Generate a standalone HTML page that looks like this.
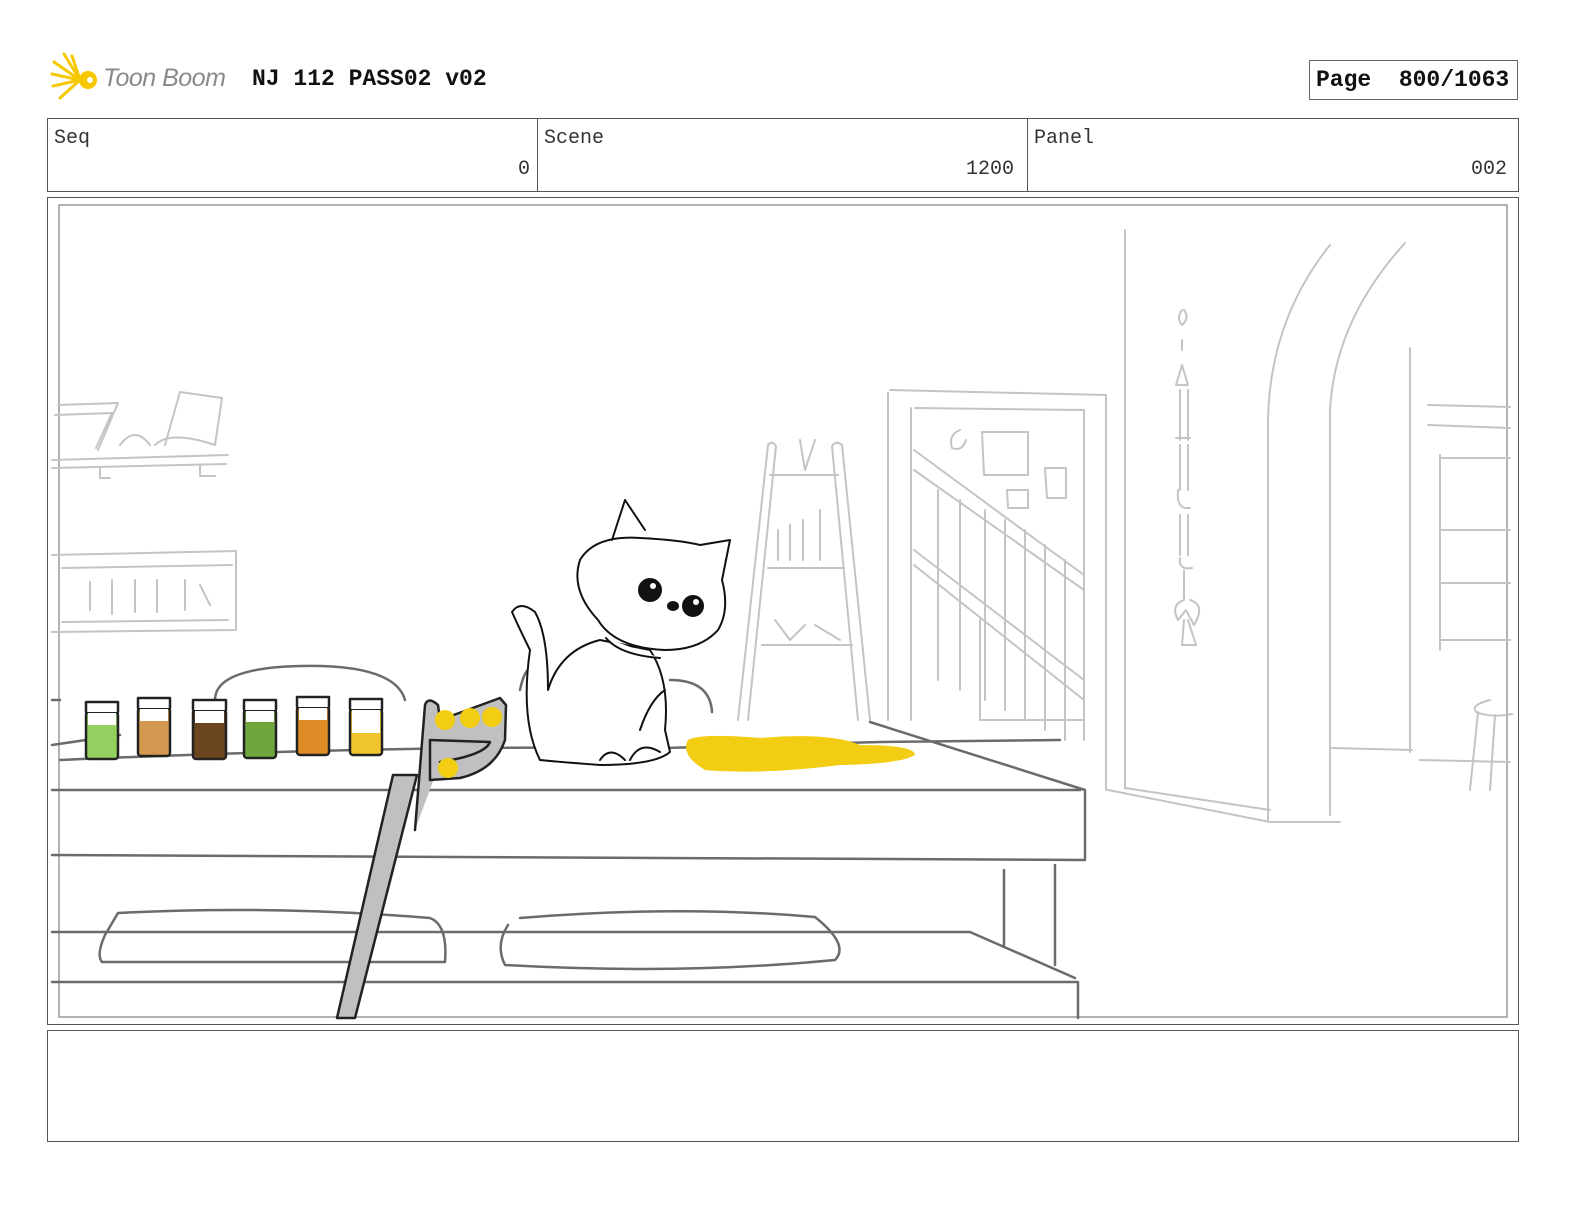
<!DOCTYPE html>
<html><head><meta charset="utf-8"><style>
body{margin:0;background:#fff;width:1584px;height:1224px;position:relative;overflow:hidden;font-family:"Liberation Mono",monospace}
.a{position:absolute}
.box{position:absolute;border:1px solid #555;box-sizing:border-box}
.lbl{font-size:20px;color:#333}
</style></head><body>
<svg class="a" style="left:50px;top:52px" width="52" height="52" viewBox="0 0 52 52">
<g stroke="#f6c800" stroke-width="3" stroke-linecap="round">
<line x1="30" y1="28" x2="4" y2="10"/><line x1="30" y1="28" x2="2" y2="22"/><line x1="30" y1="28" x2="3" y2="34"/><line x1="30" y1="28" x2="10" y2="46"/><line x1="30" y1="28" x2="22" y2="4"/><line x1="30" y1="28" x2="14" y2="2"/></g>
<circle cx="38" cy="28" r="9" fill="#f6c800"/><circle cx="40" cy="28" r="3" fill="#fff"/></svg>
<div class="a" style="left:103px;top:64px;font-family:'Liberation Sans',sans-serif;font-style:italic;font-size:25px;color:#8a8a8a;letter-spacing:-0.5px">Toon Boom</div>
<div class="a" style="left:252px;top:66px;font-size:23px;font-weight:bold;color:#111">NJ 112 PASS02 v02</div>
<div class="box" style="left:1309px;top:60px;width:209px;height:40px;border-color:#666"></div>
<div class="a" style="left:1316px;top:67px;font-size:23px;font-weight:bold;color:#111;white-space:pre">Page  800/1063</div>
<div class="box" style="left:47px;top:118px;width:1472px;height:74px"></div>
<div class="a" style="left:537px;top:118px;width:1px;height:74px;background:#555"></div>
<div class="a" style="left:1027px;top:118px;width:1px;height:74px;background:#555"></div>
<div class="a lbl" style="left:54px;top:127px">Seq</div>
<div class="a lbl" style="left:544px;top:127px">Scene</div>
<div class="a lbl" style="left:1034px;top:127px">Panel</div>
<div class="a lbl" style="left:518px;top:158px">0</div>
<div class="a lbl" style="left:966px;top:158px">1200</div>
<div class="a lbl" style="left:1471px;top:158px">002</div>
<div class="box" style="left:47px;top:197px;width:1472px;height:828px"></div>
<div class="box" style="left:47px;top:1030px;width:1472px;height:112px"></div>
<svg class="a" style="left:0;top:0" width="1584" height="1224" viewBox="0 0 1584 1224" fill="none" stroke-linecap="round" stroke-linejoin="round">
<rect x="59" y="205" width="1448" height="812" stroke="#999" stroke-width="1.5"/>
<g stroke="#c4c4c4" stroke-width="2">
<path d="M52 460 L228 455 M52 468 L226 464 M58 405 L118 403 L98 450 M55 415 L112 413 L96 448 M120 445 Q135 425 150 445 M155 445 Q170 430 215 445 L222 398 L180 392 L165 445 M100 468 V478 H110 M200 466 V476 H215"/>
<path d="M52 555 L236 551 L236 630 L52 632 M62 568 L232 565 M62 622 L228 620 M90 582 V610 M112 580 V614 M135 580 V612 M157 580 V612 M185 580 V610 M200 585 L210 605"/>
<path d="M738 720 L768 445 Q772 440 776 446 L748 720 M870 720 L842 445 Q836 440 832 446 L858 720 M770 475 H838 M768 568 H844 M762 645 H852 M778 530 V560 M790 525 V560 M803 520 V560 M820 510 V560 M775 620 L790 640 L805 625 M815 625 L840 640 M800 440 L805 470 L815 440"/>
<path d="M888 393 V720 M890 390 L1106 395 V790 M911 408 V720 M915 408 L1084 410 V740 M914 450 L1084 575 M914 470 L1084 590 M914 550 L1084 680 M914 565 L1084 700 M938 490 V680 M960 500 V690 M985 510 V700 M1005 520 V710 M1025 530 V720 M1045 545 V730 M1065 560 V740 M982 432 H1028 V475 H984 Z M1045 468 H1066 V498 H1047 Z M1007 490 H1028 V508 H1008 Z M960 430 Q948 435 952 448 Q962 452 966 440 M980 620 V720 H1084"/>
<path d="M1125 230 V788 M1108 790 L1270 822 L1340 822 M1125 788 L1270 810 M1268 822 V420 Q1270 320 1330 245 M1330 815 V410 Q1335 320 1405 243 M1332 748 L1412 750 M1410 348 V752 M1420 760 L1510 762 M1428 405 L1510 407 M1428 425 L1510 428 M1440 455 V650 M1440 458 H1510 M1440 530 H1510 M1440 583 H1510 M1440 640 H1510 M1490 700 Q1470 705 1476 712 Q1490 718 1512 714 M1478 712 L1470 790 M1495 715 L1490 790"/>
<path d="M1182 310 Q1176 318 1182 325 Q1190 318 1184 310 M1182 340 V350 M1182 365 L1176 385 H1188 Z M1180 390 V440 M1188 390 V440 M1176 438 H1190 M1180 445 V490 M1188 445 V490 M1178 490 Q1176 510 1190 508 M1180 515 V555 M1188 515 V555 M1180 558 Q1178 570 1192 568 M1184 570 V600 Q1170 605 1178 620 L1186 610 L1194 625 Q1206 605 1190 600 M1184 620 L1182 645 H1196 L1188 620"/>
</g>
<g stroke="#6b6b6b" stroke-width="2.5">
<path d="M215 700 Q215 668 300 666 Q395 664 405 700 M520 690 Q525 665 535 668 M670 680 Q710 680 712 712"/>
<path d="M52 700 L60 700 M52 745 L120 735 M60 760 Q400 745 665 748 L880 742 L1060 740 M52 790 L1080 790 M870 722 L1085 790 L1085 860 M52 855 L1085 860 M52 932 L970 932 L1075 978 M52 982 L1078 982 L1078 1018 M1004 870 V945 M1055 865 V965"/>
<path d="M118 913 Q270 905 430 918 Q448 925 445 962 L102 962 Q96 955 105 935 Z M520 918 Q680 905 815 917 Q850 945 835 960 Q680 975 505 965 Q495 945 508 925"/>
</g>
<path d="M688 740 Q700 733 760 738 Q830 732 860 745 Q915 745 915 755 Q900 764 840 765 Q760 775 705 770 Q680 755 688 740 Z" fill="#f2cd12"/>
<g stroke="#222" stroke-width="2.5">
<rect x="86" y="712" width="32" height="47" rx="3" fill="#94d060"/><path d="M86 712 V702 H118 V712" fill="#fff"/>
<rect x="138" y="708" width="32" height="48" rx="3" fill="#d4974f"/><path d="M138 708 V698 H170 V708" fill="#fff"/>
<rect x="193" y="710" width="33" height="49" rx="3" fill="#6b4520"/><path d="M193 710 V700 H226 V710" fill="#fff"/>
<rect x="244" y="710" width="32" height="48" rx="3" fill="#6fa63e"/><path d="M244 710 V700 H276 V710" fill="#fff"/>
<rect x="297" y="707" width="32" height="48" rx="3" fill="#e08c26"/><path d="M297 707 V697 H329 V707" fill="#fff"/>
<rect x="350" y="709" width="32" height="46" rx="3" fill="#f1c52c"/><path d="M350 709 V699 H382 V709" fill="#fff"/>
</g>
<g fill="#fff" stroke="none"><rect x="88" y="713" width="28" height="12"/><rect x="140" y="709" width="28" height="12"/><rect x="195" y="711" width="29" height="12"/><rect x="246" y="711" width="28" height="11"/><rect x="299" y="708" width="28" height="12"/><rect x="352" y="710" width="28" height="23"/></g>
<path d="M337 1018 L393 775 L417 775 L355 1018 Z" fill="#c0c0c0" stroke="#222" stroke-width="2.5"/>
<path d="M415 830 L425 705 Q428 696 438 705 L440 720 L500 698 L506 705 L505 740 Q495 770 460 778 L430 780 L430 740 L490 742 Q485 755 440 762" fill="#c0c0c0" stroke="#222" stroke-width="2.5"/>
<g fill="#f2cd12"><circle cx="445" cy="720" r="10"/><circle cx="470" cy="718" r="10"/><circle cx="492" cy="717" r="10"/><circle cx="448" cy="768" r="10"/></g>
<g stroke="#111" stroke-width="2" fill="#fff">
<path d="M540 760 Q520 720 530 650 Q520 630 512 612 Q520 600 535 612 Q548 635 548 690 Q560 650 600 640 L650 650 Q670 680 665 730 L670 752 Q655 765 600 765 Q560 762 540 760 Z"/>
<path d="M612 540 L625 500 L645 530 M700 545 L730 540 L722 580 Q730 610 718 630 Q700 650 665 650 Q615 648 598 620 Q570 590 580 560 Q595 535 640 538 Q680 540 700 545 Z"/>
<circle cx="650" cy="590" r="11" fill="#111"/><circle cx="693" cy="606" r="10" fill="#111"/><circle cx="653" cy="586" r="3" fill="#fff" stroke="none"/><circle cx="696" cy="602" r="3" fill="#fff" stroke="none"/>
<ellipse cx="673" cy="606" rx="5" ry="4" fill="#111"/>
<path d="M606 638 Q620 655 660 658 M640 730 Q650 700 665 690 M600 760 Q610 745 625 760 M630 760 Q640 740 660 752"/>
</g>
</svg>
</body></html>
